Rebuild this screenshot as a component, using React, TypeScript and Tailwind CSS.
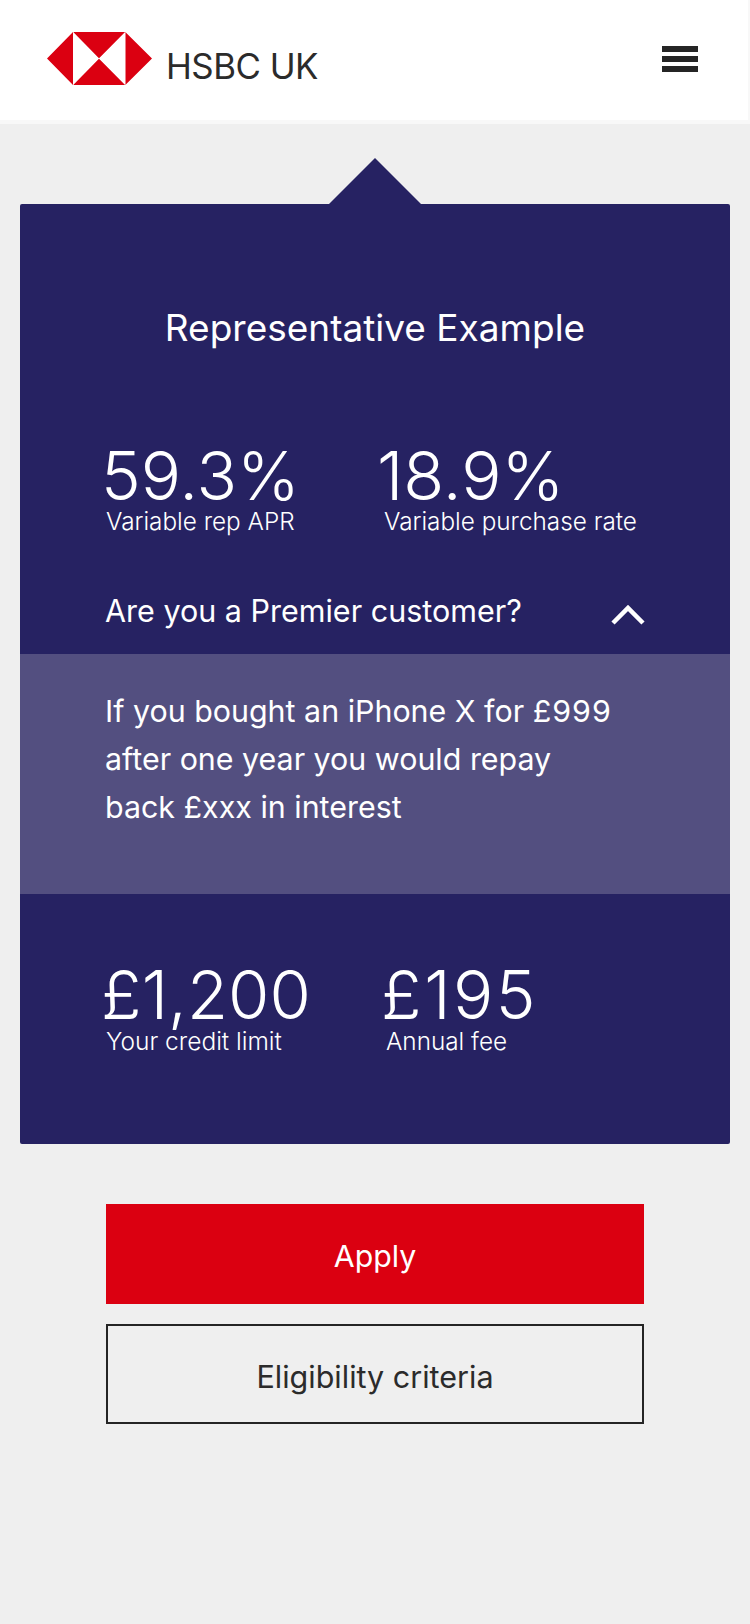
export default function App() {
  return (
    <div className="min-h-[1624px] bg-[#efefef] font-['Inter',sans-serif] antialiased">
      <header className="h-[124px] border-b-4 border-[#f8f8f8] bg-white border-r-2 flex items-center justify-between pl-[46px] pr-[50px]">
        <div className="flex items-center gap-[13px] -mt-[3px]">
          <svg width="107" height="55" viewBox="0 0 107 55">
            <path d="M1 27.5 L27 1 V54 Z M106 27.5 L79.3 1 V54 Z" fill="#db0011" />
            <path d="M27 1 H79.3 L53 27.5 Z M27 54 H79.3 L53 27.5 Z" fill="#db0011" />
            <path d="M27 1 L53 27.5 L27 54 Z M79.3 1 L53 27.5 L79.3 54 Z" fill="#ffffff" />
          </svg>
          <span className="pt-[15px] text-[34.8px] leading-none text-[#2b2b2b] tracking-[-0.5px]">HSBC UK</span>
        </div>
        <div className="flex flex-col gap-1 -mt-[2px]">
          <div className="h-1.5 w-9 bg-[#252525]" />
          <div className="h-1.5 w-9 bg-[#252525]" />
          <div className="h-1.5 w-9 bg-[#252525]" />
        </div>
      </header>
      <main className="pt-20 px-5">
        <section className="relative rounded-[2px] bg-[#262262] text-white">
          <div className="absolute left-[309px] -top-[46px] size-0 border-x-[46px] border-b-[46px] border-x-transparent border-b-[#262262]" />
          <h2 className="pt-[102px] text-center text-[37px] leading-[44px] font-normal">Representative Example</h2>
          <div className="mt-[95px] pl-[84px] flex">
            <div className="w-[275px]">
              <div className="-ml-[3px] text-[67px] leading-[62px] font-light">59.3%</div>
              <div className="pl-[2px] text-[24.3px] leading-[28px] font-light">Variable rep APR</div>
            </div>
            <div>
              <div className="-ml-[2px] text-[67px] leading-[62px] font-light">18.9%</div>
              <div className="pl-[5px] text-[24.3px] leading-[28px] font-light">Variable purchase rate</div>
            </div>
          </div>
          <div className="mt-[51px] h-[50px] px-[85px] flex items-center justify-between">
            <span className="text-[30.5px] leading-[40px]">Are you a Premier customer?</span>
            <svg width="34" height="22" viewBox="0 0 34 22" className="mt-[7px]">
              <path d="M2 19 L17 4 L32 19" stroke="#fff" strokeWidth="4.5" fill="none" />
            </svg>
          </div>
          <div className="mt-[18px] h-[240px] bg-[#534f80] pl-[85px] pt-[33px] text-[30.4px] leading-[48px]">
            If you bought an iPhone X for <span className="tracking-[1px]">£999</span><br />after one year you would repay<br />back £xxx in interest
          </div>
          <div className="pl-[84px] pt-[70px] pb-[88px] flex">
            <div className="w-[279px]">
              <div className="-ml-[3px] text-[67px] leading-[62px] font-light">£1,200</div>
              <div className="pl-[2px] text-[24.5px] leading-[30px] font-light">Your credit limit</div>
            </div>
            <div>
              <div className="-ml-[2px] text-[67px] leading-[62px] font-light tracking-[2.5px]">£195</div>
              <div className="pl-[3px] text-[24.3px] leading-[30px] font-light">Annual fee</div>
            </div>
          </div>
        </section>
        <div className="mt-[60px] mx-[86px] flex flex-col gap-5">
          <button className="h-[100px] pt-[6px] bg-[#db0011] text-white text-[30.3px]">Apply</button>
          <button className="h-[100px] pt-[6px] border-2 border-[#252525] text-[#2b2b2b] text-[30.5px]">Eligibility criteria</button>
        </div>
      </main>
    </div>
  );
}
